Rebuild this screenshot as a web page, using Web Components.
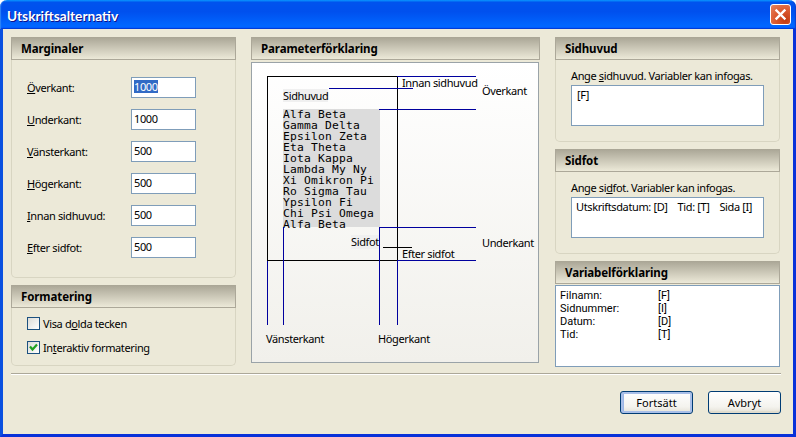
<!DOCTYPE html>
<html lang="sv">
<head>
<meta charset="utf-8">
<title>Utskriftsalternativ</title>
<style>
  html, body { margin: 0; padding: 0; background: #fff; }
  body { font: 11px "Noto Sans", Tahoma, sans-serif; letter-spacing: -0.37px; color: #000; }
</style>
</head>
<body>
<xp-dialog heading="Utskriftsalternativ">
  <div-col slot="left">
    <xp-panel heading="Marginaler" body-height="218">
      <div-col gap="11" pad="17px 0 0 15px">
        <xp-field selected value="1000"><u>Ö</u>verkant:</xp-field>
        <xp-field value="1000"><u>U</u>nderkant:</xp-field>
        <xp-field value="500"><u>V</u>änsterkant:</xp-field>
        <xp-field value="500"><u>H</u>ögerkant:</xp-field>
        <xp-field value="500"><u>I</u>nnan sidhuvud:</xp-field>
        <xp-field value="500"><u>E</u>fter sidfot:</xp-field>
      </div-col>
    </xp-panel>
    <xp-panel heading="Formatering" body-height="58">
      <div-col gap="11" pad="9px 0 0 15px">
        <xp-check>Visa d<u>o</u>lda tecken</xp-check>
        <xp-check checked>In<u>t</u>eraktiv formatering</xp-check>
      </div-col>
    </xp-panel>
  </div-col>
  <div-col slot="middle">
    <xp-panel heading="Parameterförklaring" plain><xp-diagram></xp-diagram></xp-panel>
  </div-col>
  <div-col slot="right">
    <xp-panel heading="Sidhuvud" body-height="82">
      <xp-textbox text="[F]" indent="5">Ange <u>s</u>idhuvud. Variabler kan infogas.</xp-textbox>
    </xp-panel>
    <xp-panel heading="Sidfot" body-height="82">
      <xp-textbox text="Utskriftsdatum: [D]&#160;&#160;&#160;&#160;Tid: [T]&#160;&#160;&#160;&#160;Sida [I]" indent="4">Ange si<u>d</u>fot. Variabler kan infogas.</xp-textbox>
    </xp-panel>
    <xp-panel heading="Variabelförklaring" plain>
      <xp-varlist>
        <span>Filnamn:</span><span>[F]</span>
        <span>Sidnummer:</span><span>[I]</span>
        <span>Datum:</span><span>[D]</span>
        <span>Tid:</span><span>[T]</span>
      </xp-varlist>
    </xp-panel>
  </div-col>
  <xp-button slot="buttons" default>Fortsätt</xp-button>
  <xp-button slot="buttons">Avbryt</xp-button>
</xp-dialog>

<script>
// simple vertical stack, gap and padding come from attributes
class DivCol extends HTMLElement {
  constructor() {
    super();
    this.attachShadow({ mode: 'open' });
  }
  connectedCallback() {
    const gap = this.getAttribute('gap') || 7;
    const pad = this.getAttribute('pad') || '0';
    this.shadowRoot.innerHTML = `
      <style>
        :host { display: flex; flex-direction: column; gap: ${gap}px; padding: ${pad}; }
      </style>
      <slot></slot>`;
  }
}
customElements.define('div-col', DivCol);

class XpDialog extends HTMLElement {
  constructor() {
    super();
    this.attachShadow({ mode: 'open' });
  }
  connectedCallback() {
    const heading = this.getAttribute('heading') || '';
    this.shadowRoot.innerHTML = `
      <style>
        :host { display: flex; flex-direction: column; width: 796px; height: 437px; box-sizing: border-box; overflow: hidden; background: #fff; }
        .title {
          flex: none; height: 29px; box-sizing: border-box; display: flex; align-items: center; justify-content: space-between;
          padding: 0 5px 0 7px; border-radius: 7px 7px 0 0;
          background: linear-gradient(180deg, #0997ff 0, #0053ee 8%, #0050ee 40%, #0066ff 88%, #0066ff 93%, #005bff 95%, #003dd7 96%, #003dd7 100%);
          box-shadow: inset 2px 0 1px -1px #2f86f5, inset -2px 0 1px -1px #0a3fd0;
        }
        .title span {
          color: #fff; font: bold 13.7px Lato, "Open Sans", sans-serif; letter-spacing: 0; text-shadow: 1px 1px #0f1089;
          padding-top: 2px;
        }
        .close {
          width: 21px; height: 21px; box-sizing: border-box; border: 1px solid #fff; border-radius: 3px;
          background: radial-gradient(circle at 75% 80%, #c23a10 0, #dc5a30 50%, #e5845f 100%);
          display: flex; align-items: center; justify-content: center;
        }
        .client {
          flex: 1; background: #ece9d8; border: solid #0831d9; border-width: 0 3px 3px 3px; border-left-color: #0a50e0;
          display: flex; flex-direction: column; min-height: 0;
        }
        .cols {
          flex: none; display: grid; grid-template-columns: 225px 289px 225px; column-gap: 15px;
          padding: 8px 0 0 8px; height: 329px; box-sizing: border-box;
        }
        hr { flex: none; height: 2px; border: 0; margin: 15px 12px 0 8px; background: linear-gradient(#aca899 50%, #fff 50%); }
        .buttons { display: flex; justify-content: flex-end; gap: 15px; padding: 16px 12px 0 0; }
      </style>
      <div class="title">
        <span>${heading}</span>
        <div class="close">
          <svg width="13" height="13" viewBox="0 0 13 13"><path d="M2.5 2.5 L10.5 10.5 M10.5 2.5 L2.5 10.5" stroke="#fff" stroke-width="2.4" stroke-linecap="square"/></svg>
        </div>
      </div>
      <div class="client">
        <div class="cols">
          <slot name="left"></slot>
          <slot name="middle"></slot>
          <slot name="right"></slot>
        </div>
        <hr>
        <div class="buttons"><slot name="buttons"></slot></div>
      </div>`;
  }
}
customElements.define('xp-dialog', XpDialog);

class XpPanel extends HTMLElement {
  constructor() {
    super();
    this.attachShadow({ mode: 'open' });
  }
  connectedCallback() {
    const plain = this.hasAttribute('plain');
    const h = this.getAttribute('body-height');
    this.shadowRoot.innerHTML = `
      <style>
        :host { display: block; }
        .head {
          height: 23px; box-sizing: border-box; padding: 2px 0 0 9px;
          border: 1px solid #aca899; border-top: 0;
          background: linear-gradient(#a9a595, #ece9d8);
          font: bold 11.5px "Noto Sans", Tahoma, sans-serif; letter-spacing: -0.1px; line-height: 20px; color: #000;
        }
        .body {
          box-sizing: border-box; ${h ? `height: ${h}px;` : ''}
          ${plain ? '' : 'border: 1px solid #d8d5c2; border-top: 0; border-radius: 0 0 5px 5px;'}
        }
      </style>
      <div class="head">${this.getAttribute('heading') || ''}</div>
      <div class="body"><slot></slot></div>`;
  }
}
customElements.define('xp-panel', XpPanel);

class XpField extends HTMLElement {
  constructor() {
    super();
    this.attachShadow({ mode: 'open' });
  }
  connectedCallback() {
    const value = this.getAttribute('value') || '';
    const sel = this.hasAttribute('selected');
    this.shadowRoot.innerHTML = `
      <style>
        :host { display: flex; align-items: center; height: 21px; }
        .label { width: 104px; padding-bottom: 1px; }
        .box {
          width: 65px; height: 21px; box-sizing: border-box; border: 1px solid #7f9db9; background: #fff;
          padding: 0 0 0 2px; line-height: 17px;
        }
        .sel { background: #316ac5; color: #fff; display: inline-block; line-height: 13px; }
      </style>
      <span class="label"><slot></slot></span>
      <div class="box"><span class="${sel ? 'sel' : ''}">${value}</span></div>`;
  }
}
customElements.define('xp-field', XpField);

class XpCheck extends HTMLElement {
  constructor() {
    super();
    this.attachShadow({ mode: 'open' });
  }
  connectedCallback() {
    const tick = this.hasAttribute('checked')
      ? '<svg width="11" height="11" viewBox="0 0 11 11"><path d="M2 4.5 L4.5 7.5 L9 2.5" fill="none" stroke="#21a121" stroke-width="2.2"/></svg>'
      : '';
    this.shadowRoot.innerHTML = `
      <style>
        :host { display: flex; align-items: center; gap: 3px; height: 13px; }
        .box {
          width: 13px; height: 13px; box-sizing: border-box; border: 1px solid #1c5180;
          background: linear-gradient(135deg, #dcdcd7, #fff); display: flex; align-items: center; justify-content: center;
        }
      </style>
      <div class="box">${tick}</div>
      <span><slot></slot></span>`;
  }
}
customElements.define('xp-check', XpCheck);

class XpTextbox extends HTMLElement {
  constructor() {
    super();
    this.attachShadow({ mode: 'open' });
  }
  connectedCallback() {
    const text = this.getAttribute('text') || '';
    const indent = this.getAttribute('indent') || 4;
    this.shadowRoot.innerHTML = `
      <style>
        :host { display: block; padding: 8px 0 0 15px; }
        .label { height: 17px; line-height: 15px; white-space: nowrap; }
        .box {
          width: 193px; height: 41px; box-sizing: border-box; border: 1px solid #7f9db9; background: #fff;
          padding: 1px 0 0 ${indent}px; line-height: 15px; white-space: nowrap;
        }
      </style>
      <div class="label"><slot></slot></div>
      <div class="box">${text}</div>`;
  }
}
customElements.define('xp-textbox', XpTextbox);

class XpVarlist extends HTMLElement {
  constructor() {
    super();
    this.attachShadow({ mode: 'open' });
  }
  connectedCallback() {
    this.shadowRoot.innerHTML = `
      <style>
        :host {
          display: grid; grid-template-columns: 98px 1fr; grid-auto-rows: 13px; align-content: start;
          height: 82px; box-sizing: border-box; margin-top: 1px; padding: 3px 0 0 4px;
          border: 1px solid #7f9db9; background: #fff; line-height: 13px;
          font-family: Roboto, sans-serif; letter-spacing: 0;
        }
      </style>
      <slot></slot>`;
  }
}
customElements.define('xp-varlist', XpVarlist);

class XpButton extends HTMLElement {
  constructor() {
    super();
    this.attachShadow({ mode: 'open' });
  }
  connectedCallback() {
    const glow = this.hasAttribute('default')
      ? 'box-shadow: inset 0 0 0 2px #a9bfe8, inset 2px 0 0 1px #9db6e6;'
      : 'box-shadow: inset 0 -2px 1px #dfdbcd;';
    this.shadowRoot.innerHTML = `
      <style>
        :host {
          display: flex; align-items: center; justify-content: center; width: 73px; height: 23px; box-sizing: border-box;
          border: 1px solid #003c74; border-radius: 3px; background: linear-gradient(#fff, #f4f3ee 70%, #e4e1d6);
          letter-spacing: 0; padding-bottom: 1px;
          ${glow}
        }
      </style>
      <slot></slot>`;
  }
}
customElements.define('xp-button', XpButton);

// the diagram is a free canvas: every line sits at its own place on the page preview
class XpDiagram extends HTMLElement {
  constructor() {
    super();
    this.attachShadow({ mode: 'open' });
  }
  connectedCallback() {
    const black = '#000';
    const blue = '#00009e';
    const lines = [
      // page outline
      [15, 13, 130, 1, black], [15, 13, 1, 184, black], [145, 13, 1, 184, black], [15, 197, 130, 1, black],
      // margins going out to the right
      [145, 13, 79, 1, blue], [77, 25, 84, 1, blue], [127, 46, 97, 1, blue],
      [127, 164, 97, 1, blue], [131, 184, 29, 1, black], [145, 197, 79, 1, blue],
      // margins going down
      [15, 198, 1, 64, blue], [31, 164, 1, 98, blue], [127, 164, 1, 98, blue], [145, 198, 1, 64, blue]
    ];
    const labels = [
      ['Innan sidhuvud', 150, 13], ['Överkant', 230, 21], ['Underkant', 230, 173],
      ['Efter sidfot', 150, 184], ['Vänsterkant', 14, 269], ['Högerkant', 126, 269]
    ];
    const lineHtml = lines.map(([x, y, w, h, c]) =>
      `<i style="left:${x}px;top:${y}px;width:${w}px;height:${h}px;background:${c}"></i>`).join('');
    const labelHtml = labels.map(([t, x, y]) =>
      `<span class="t" style="left:${x}px;top:${y}px">${t}</span>`).join('');
    const body = ['Alfa Beta', 'Gamma Delta', 'Epsilon Zeta', 'Eta Theta', 'Iota Kappa', 'Lambda My Ny',
      'Xi Omikron Pi', 'Ro Sigma Tau', 'Ypsilon Fi', 'Chi Psi Omega', 'Alfa Beta'].join('\n');
    this.shadowRoot.innerHTML = `
      <style>
        :host {
          display: block; position: relative; height: 301px; width: 288px; margin-top: 2px; box-sizing: border-box;
          background: linear-gradient(#fff, #f1f0eb); border: 1px solid #9aa3a8; overflow: hidden;
        }
        i { position: absolute; display: block; }
        .t { position: absolute; line-height: 14px; white-space: nowrap; }
        .grey { background: #f0f0f0; }
        pre {
          position: absolute; left: 31px; top: 46px; width: 97px; height: 118px; margin: 0;
          background: #dcdcdc; color: #000; font: 11.3px/11px "DejaVu Sans Mono", monospace; letter-spacing: 0.2px;
          padding: 0;
        }
      </style>
      <span class="t grey" style="left:31px;top:26px;height:13px;line-height:13px;">Sidhuvud</span>
      <span class="t grey" style="left:99px;top:172px;">Sidfot</span>
      <pre>${body}</pre>
      ${lineHtml}${labelHtml}`;
  }
}
customElements.define('xp-diagram', XpDiagram);
</script>
</body>
</html>
